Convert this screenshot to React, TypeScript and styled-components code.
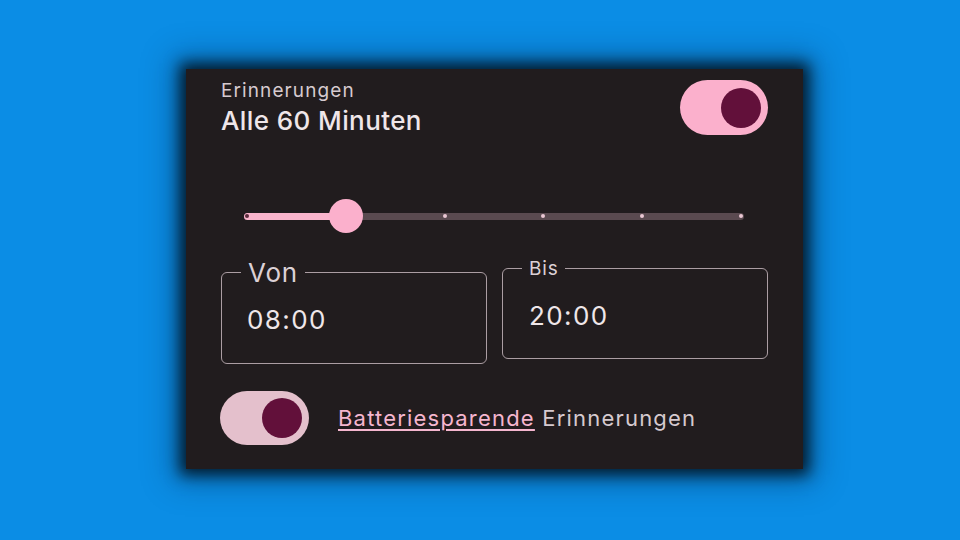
import React from "react";
import styled, { createGlobalStyle } from "styled-components";

const Global = createGlobalStyle`
  html, body { margin: 0; padding: 0; background: #0b8de5; }
  body { width: 960px; height: 540px; overflow: hidden; font-family: Inter, "Noto Sans", sans-serif; }
`;

const Page = styled.div`
  width: 960px;
  height: 540px;
  padding: 69px 0 0 186px;
  box-sizing: border-box;
`;

const Panel = styled.div`
  width: 617px;
  height: 400px;
  box-sizing: border-box;
  background: #211c1e;
  box-shadow: 0 0 14px 6px rgba(0, 0, 0, 0.75), 0 0 30px 12px rgba(0, 20, 50, 0.35);
  padding: 11px 35px 0 35px;
  display: flex;
  flex-direction: column;
`;

const Header = styled.div`
  display: flex;
  justify-content: space-between;
  align-items: flex-start;
  height: 55px;
`;

const Titles = styled.div`
  display: flex;
  flex-direction: column;
`;

const Overline = styled.div`
  font-size: 19px;
  line-height: 22px;
  letter-spacing: 1.1px;
  color: #d6cacf;
`;

const Title = styled.div`
  margin-top: 2px;
  font-size: 26px;
  line-height: 34px;
  font-weight: 500;
  letter-spacing: 0.4px;
  color: #efe6e9;
`;

const SwitchTrack = styled.div<{ $tone: "strong" | "soft"; $w: number; $h: number }>`
  width: ${(p) => p.$w}px;
  height: ${(p) => p.$h}px;
  border-radius: ${(p) => p.$h / 2}px;
  background: ${(p) => (p.$tone === "strong" ? "#fbb0cc" : "#e4c0cc")};
  display: flex;
  align-items: center;
  justify-content: flex-end;
  padding-right: 7px;
  box-sizing: border-box;
  flex-shrink: 0;
`;

const SwitchThumb = styled.div`
  width: 40px;
  height: 40px;
  border-radius: 50%;
  background: #62103a;
`;

const SliderArea = styled.div`
  margin-top: 64px;
  height: 34px;
  padding: 0 24px 0 23px;
  display: flex;
  align-items: center;
`;

const Track = styled.div`
  position: relative;
  flex: 1;
  height: 7px;
  border-radius: 4px;
  background: #5a4a50;
`;

const ActiveTrack = styled.div`
  position: absolute;
  left: 0;
  top: 0;
  bottom: 0;
  border-radius: 4px;
  background: #f9b4cc;
`;

const Tick = styled.div<{ $on: boolean }>`
  position: absolute;
  top: 50%;
  width: 4px;
  height: 4px;
  margin: -2px 0 0 -2px;
  border-radius: 50%;
  background: ${(p) => (p.$on ? "#5a2a3c" : "#e9c7d3")};
`;

const Thumb = styled.div`
  position: absolute;
  top: 50%;
  width: 34px;
  height: 34px;
  margin: -17px 0 0 -17px;
  border-radius: 50%;
  background: #fbb0cc;
`;

const Fields = styled.div`
  margin-top: 24px;
  display: grid;
  grid-template-columns: 266px 266px;
  column-gap: 15px;
  align-items: start;
`;

const Field = styled.fieldset<{ $labelSize: number }>`
  margin: 0;
  padding: 0 0 0 19px;
  border: 1.6px solid #ab9da3;
  border-radius: 6px;
  min-width: 0;
  box-sizing: border-box;
  height: ${(p) => 91 + p.$labelSize * 0.6}px;
  color: #efe6e9;
`;

const Legend = styled.legend<{ $size: number }>`
  padding: 0 7px;
  font-size: ${(p) => p.$size}px;
  line-height: ${(p) => Math.round(p.$size * 1.2)}px;
  letter-spacing: 0.8px;
  color: #dcd0d5;
`;

const Value = styled.div<{ $top: number; $indent: number }>`
  margin-top: ${(p) => p.$top}px;
  padding-left: ${(p) => p.$indent}px;
  font-size: 26px;
  line-height: 30px;
  letter-spacing: 1.4px;
  color: #efe6e9;
`;

const BottomRow = styled.div`
  margin-top: 27px;
  margin-left: -1px;
  display: flex;
  align-items: center;
  gap: 29px;
`;

const Caption = styled.div`
  font-size: 22px;
  letter-spacing: 1.2px;
  color: #d6cacf;
`;

const LinkText = styled.a`
  color: #f5b6cf;
  text-decoration: underline;
  text-decoration-thickness: 1.5px;
  text-underline-offset: 3px;
`;

const ticks = [0, 1, 2, 3, 4, 5];
const value = 1;

export default function App() {
  const pos = (i: number) => `calc(3px + (100% - 6px) * ${i / 5})`;
  return (
    <>
      <Global />
      <Page>
        <Panel>
          <Header>
            <Titles>
              <Overline>Erinnerungen</Overline>
              <Title>Alle 60 Minuten</Title>
            </Titles>
            <SwitchTrack $tone="strong" $w={88} $h={55}>
              <SwitchThumb />
            </SwitchTrack>
          </Header>
          <SliderArea>
            <Track>
              <ActiveTrack style={{ width: pos(value) }} />
              {ticks.map((t) => (
                <Tick key={t} $on={t < value} style={{ left: pos(t) }} />
              ))}
              <Thumb style={{ left: pos(value) }} />
            </Track>
          </SliderArea>
          <Fields>
            <Field $labelSize={26}>
              <Legend $size={26}>Von</Legend>
              <Value $top={17} $indent={6}>08:00</Value>
            </Field>
            <Field $labelSize={19}>
              <Legend $size={19}>Bis</Legend>
              <Value $top={21} $indent={7}>20:00</Value>
            </Field>
          </Fields>
          <BottomRow>
            <SwitchTrack $tone="soft" $w={89} $h={54}>
              <SwitchThumb />
            </SwitchTrack>
            <Caption>
              <LinkText>Batteriesparende</LinkText> Erinnerungen
            </Caption>
          </BottomRow>
        </Panel>
      </Page>
    </>
  );
}
